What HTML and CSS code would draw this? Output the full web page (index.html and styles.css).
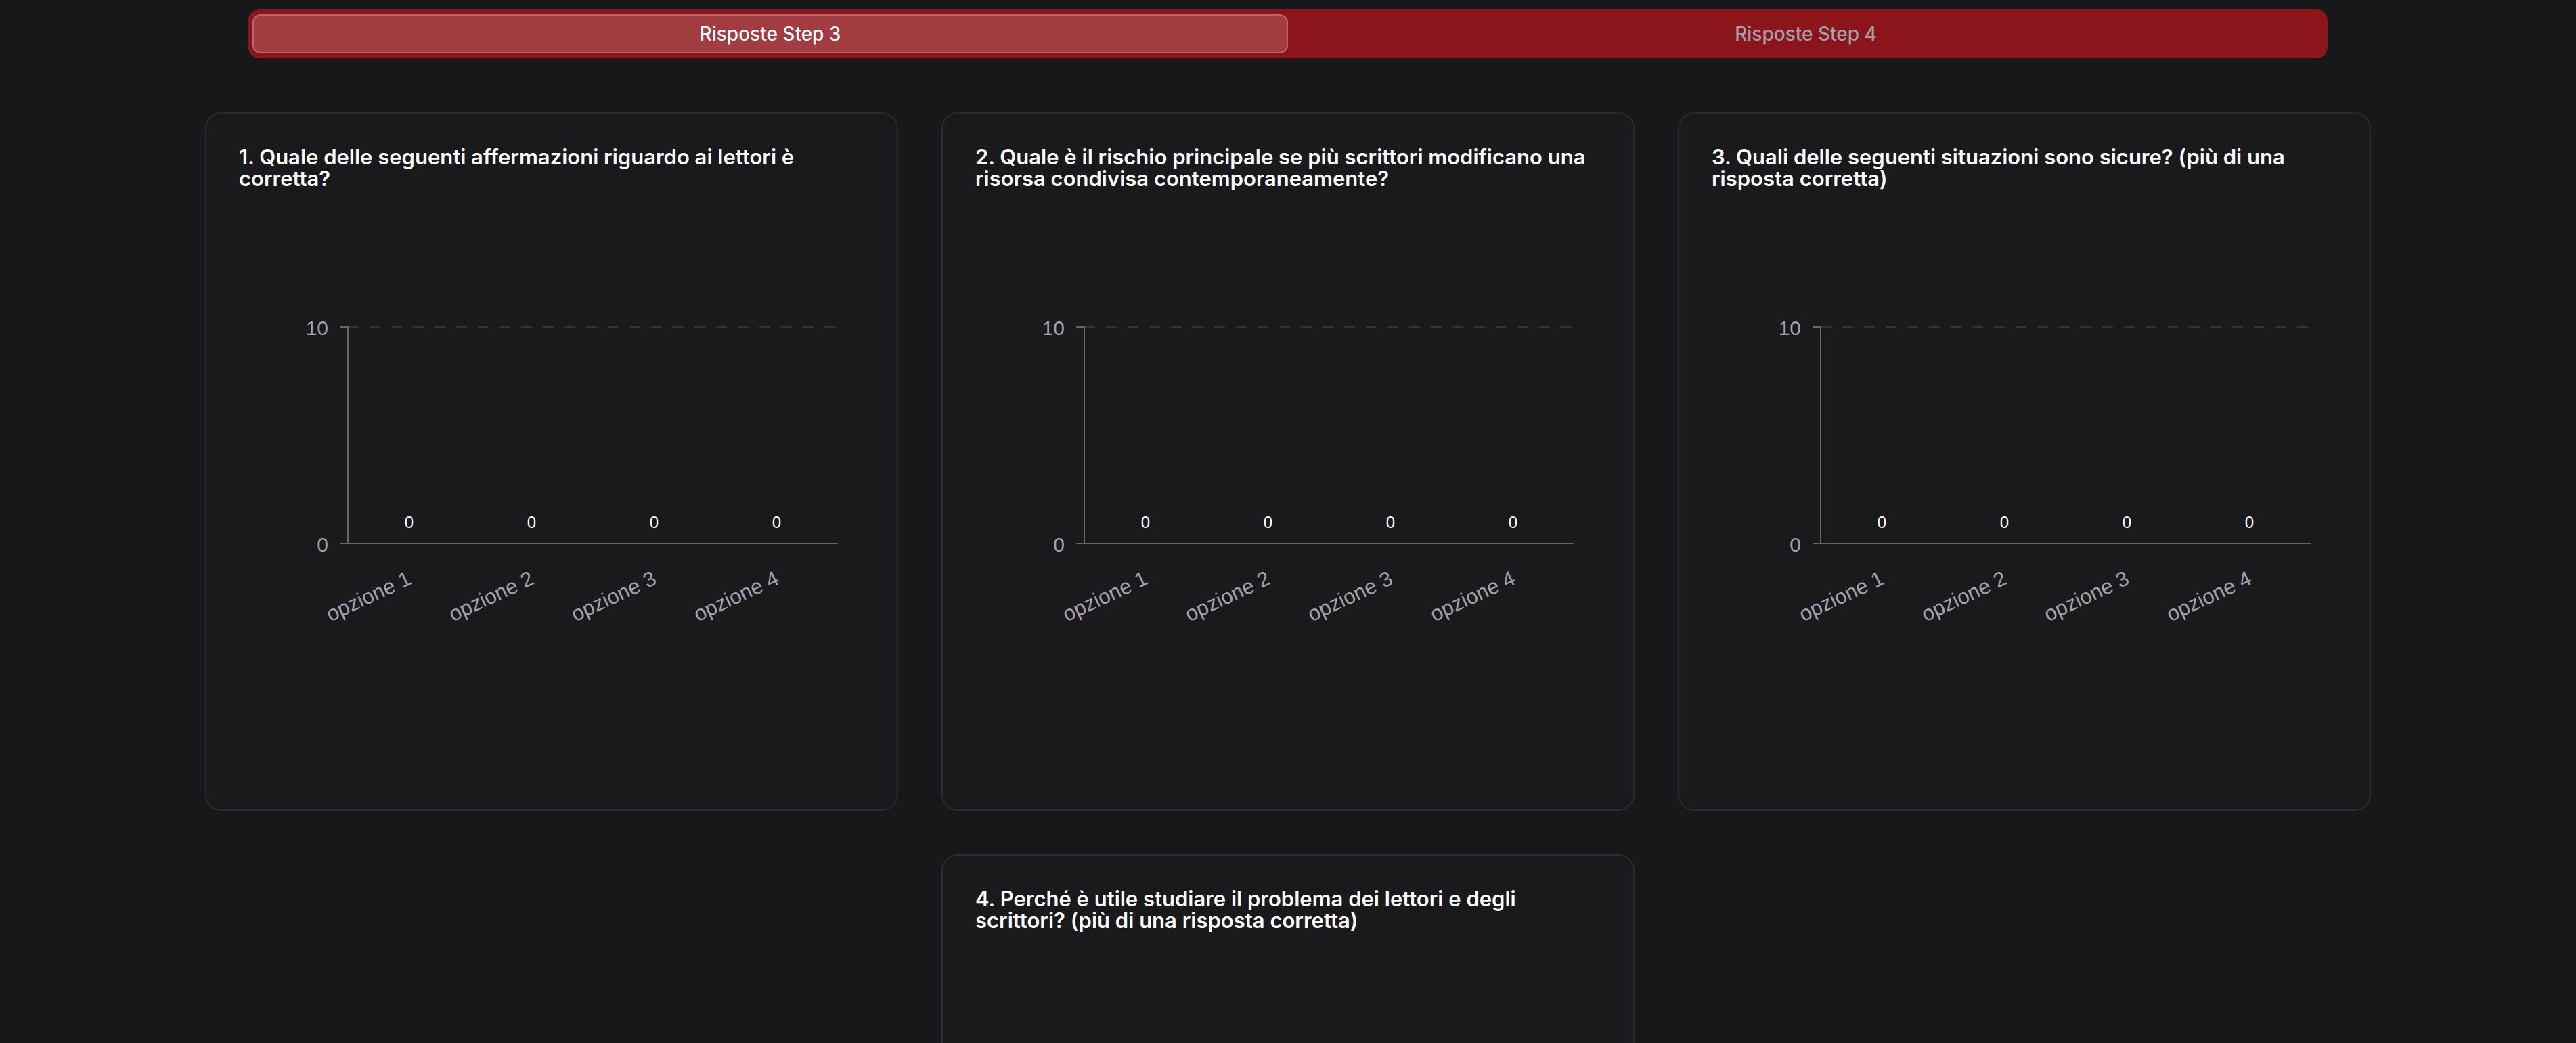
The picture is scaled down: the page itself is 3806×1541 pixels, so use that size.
FILE: index.html
```html
<!DOCTYPE html>
<html lang="it">
<head>
    <meta charset="UTF-8">
    <meta name="viewport" content="width=device-width, initial-scale=1.0">
    <title>Risposte</title>
    <link rel="stylesheet" href="styles.css">
</head>
<body>
    <div class="tabs">
        <div class="tab active">Risposte Step 3</div>
        <div class="tab">Risposte Step 4</div>
    </div>

    <div class="cards">
        <div class="card">
            <h3>1. Quale delle seguenti affermazioni riguardo ai lettori è corretta?</h3>
            <svg class="chart" viewBox="0 0 924 868" width="924" height="868">
                <line class="grid" x1="161" y1="203" x2="885" y2="203"/>
                <line class="axis" x1="161" y1="202" x2="161" y2="523"/>
                <line class="axis" x1="149" y1="203" x2="161" y2="203"/>
                <line class="axis" x1="149" y1="523" x2="885" y2="523"/>
                <text class="ytick" x="132" y="215">10</text>
                <text class="ytick" x="132" y="535">0</text>
                <text class="val" x="251.5" y="500">0</text>
                <text class="val" x="432.5" y="500">0</text>
                <text class="val" x="613.5" y="500">0</text>
                <text class="val" x="794.5" y="500">0</text>
                <text class="xtick" transform="translate(257 582) rotate(-25)">opzione 1</text>
                <text class="xtick" transform="translate(438 582) rotate(-25)">opzione 2</text>
                <text class="xtick" transform="translate(619 582) rotate(-25)">opzione 3</text>
                <text class="xtick" transform="translate(800 582) rotate(-25)">opzione 4</text>
            </svg>
        </div>

        <div class="card">
            <h3>2. Quale è il rischio principale se più scrittori modificano una risorsa condivisa contemporaneamente?</h3>
            <svg class="chart" viewBox="0 0 924 868" width="924" height="868">
                <line class="grid" x1="161" y1="203" x2="885" y2="203"/>
                <line class="axis" x1="161" y1="202" x2="161" y2="523"/>
                <line class="axis" x1="149" y1="203" x2="161" y2="203"/>
                <line class="axis" x1="149" y1="523" x2="885" y2="523"/>
                <text class="ytick" x="132" y="215">10</text>
                <text class="ytick" x="132" y="535">0</text>
                <text class="val" x="251.5" y="500">0</text>
                <text class="val" x="432.5" y="500">0</text>
                <text class="val" x="613.5" y="500">0</text>
                <text class="val" x="794.5" y="500">0</text>
                <text class="xtick" transform="translate(257 582) rotate(-25)">opzione 1</text>
                <text class="xtick" transform="translate(438 582) rotate(-25)">opzione 2</text>
                <text class="xtick" transform="translate(619 582) rotate(-25)">opzione 3</text>
                <text class="xtick" transform="translate(800 582) rotate(-25)">opzione 4</text>
            </svg>
        </div>

        <div class="card">
            <h3>3. Quali delle seguenti situazioni sono sicure? (più di una risposta corretta)</h3>
            <svg class="chart" viewBox="0 0 924 868" width="924" height="868">
                <line class="grid" x1="161" y1="203" x2="885" y2="203"/>
                <line class="axis" x1="161" y1="202" x2="161" y2="523"/>
                <line class="axis" x1="149" y1="203" x2="161" y2="203"/>
                <line class="axis" x1="149" y1="523" x2="885" y2="523"/>
                <text class="ytick" x="132" y="215">10</text>
                <text class="ytick" x="132" y="535">0</text>
                <text class="val" x="251.5" y="500">0</text>
                <text class="val" x="432.5" y="500">0</text>
                <text class="val" x="613.5" y="500">0</text>
                <text class="val" x="794.5" y="500">0</text>
                <text class="xtick" transform="translate(257 582) rotate(-25)">opzione 1</text>
                <text class="xtick" transform="translate(438 582) rotate(-25)">opzione 2</text>
                <text class="xtick" transform="translate(619 582) rotate(-25)">opzione 3</text>
                <text class="xtick" transform="translate(800 582) rotate(-25)">opzione 4</text>
            </svg>
        </div>

        <div class="card">
            <h3>4. Perché è utile studiare il problema dei lettori e degli scrittori? (più di una risposta corretta)</h3>
            <svg class="chart" viewBox="0 0 924 868" width="924" height="868">
                <line class="grid" x1="161" y1="203" x2="885" y2="203"/>
                <line class="axis" x1="161" y1="202" x2="161" y2="523"/>
                <line class="axis" x1="149" y1="203" x2="161" y2="203"/>
                <line class="axis" x1="149" y1="523" x2="885" y2="523"/>
                <text class="ytick" x="132" y="215">10</text>
                <text class="ytick" x="132" y="535">0</text>
                <text class="val" x="251.5" y="500">0</text>
                <text class="val" x="432.5" y="500">0</text>
                <text class="val" x="613.5" y="500">0</text>
                <text class="val" x="794.5" y="500">0</text>
                <text class="xtick" transform="translate(257 582) rotate(-25)">opzione 1</text>
                <text class="xtick" transform="translate(438 582) rotate(-25)">opzione 2</text>
                <text class="xtick" transform="translate(619 582) rotate(-25)">opzione 3</text>
                <text class="xtick" transform="translate(800 582) rotate(-25)">opzione 4</text>
            </svg>
        </div>
    </div>
</body>
</html>
```

FILE: styles.css
```css
body {
    margin: 0;
    background: #18181b;
    font-family: Inter, "Liberation Sans", sans-serif;
    color: #fafafa;
}

.tabs {
    display: flex;
    width: 3072px;
    height: 72px;
    box-sizing: border-box;
    margin: 14px auto 0;
    padding: 7px 6px;
    background: #8b151a;
    border-radius: 16px;
}

.tab {
    flex: 1;
    display: flex;
    align-items: center;
    justify-content: center;
    border: 2px solid transparent;
    border-radius: 12px;
    font-size: 28px;
    font-weight: 500;
    color: #a1a1aa;
}

.tab.active {
    background: #a33c40;
    border-color: #b5686b;
    color: #ffffff;
}

.cards {
    display: flex;
    flex-wrap: wrap;
    justify-content: center;
    gap: 64px;
    width: 3200px;
    margin: 80px auto 0;
}

.card {
    width: 1024px;
    box-sizing: border-box;
    padding: 48px;
    border: 2px solid #2c2c30;
    border-radius: 24px;
    background: #1a1a1d;
}

.card h3 {
    margin: 0;
    height: 64px;
    font-size: 31px;
    line-height: 32px;
    font-weight: 600;
    color: #ffffff;
}

.chart {
    display: block;
    font-family: "Liberation Sans", Arial, sans-serif;
}

.grid {
    stroke: #333337;
    stroke-width: 2;
    stroke-dasharray: 16 16;
}

.axis {
    stroke: #666668;
    stroke-width: 2;
}

.ytick {
    fill: #a1a1aa;
    font-size: 30px;
    text-anchor: end;
}

.val {
    fill: #ffffff;
    font-size: 24px;
    text-anchor: middle;
}

.xtick {
    fill: #a1a1aa;
    font-size: 31px;
    text-anchor: end;
}
```
